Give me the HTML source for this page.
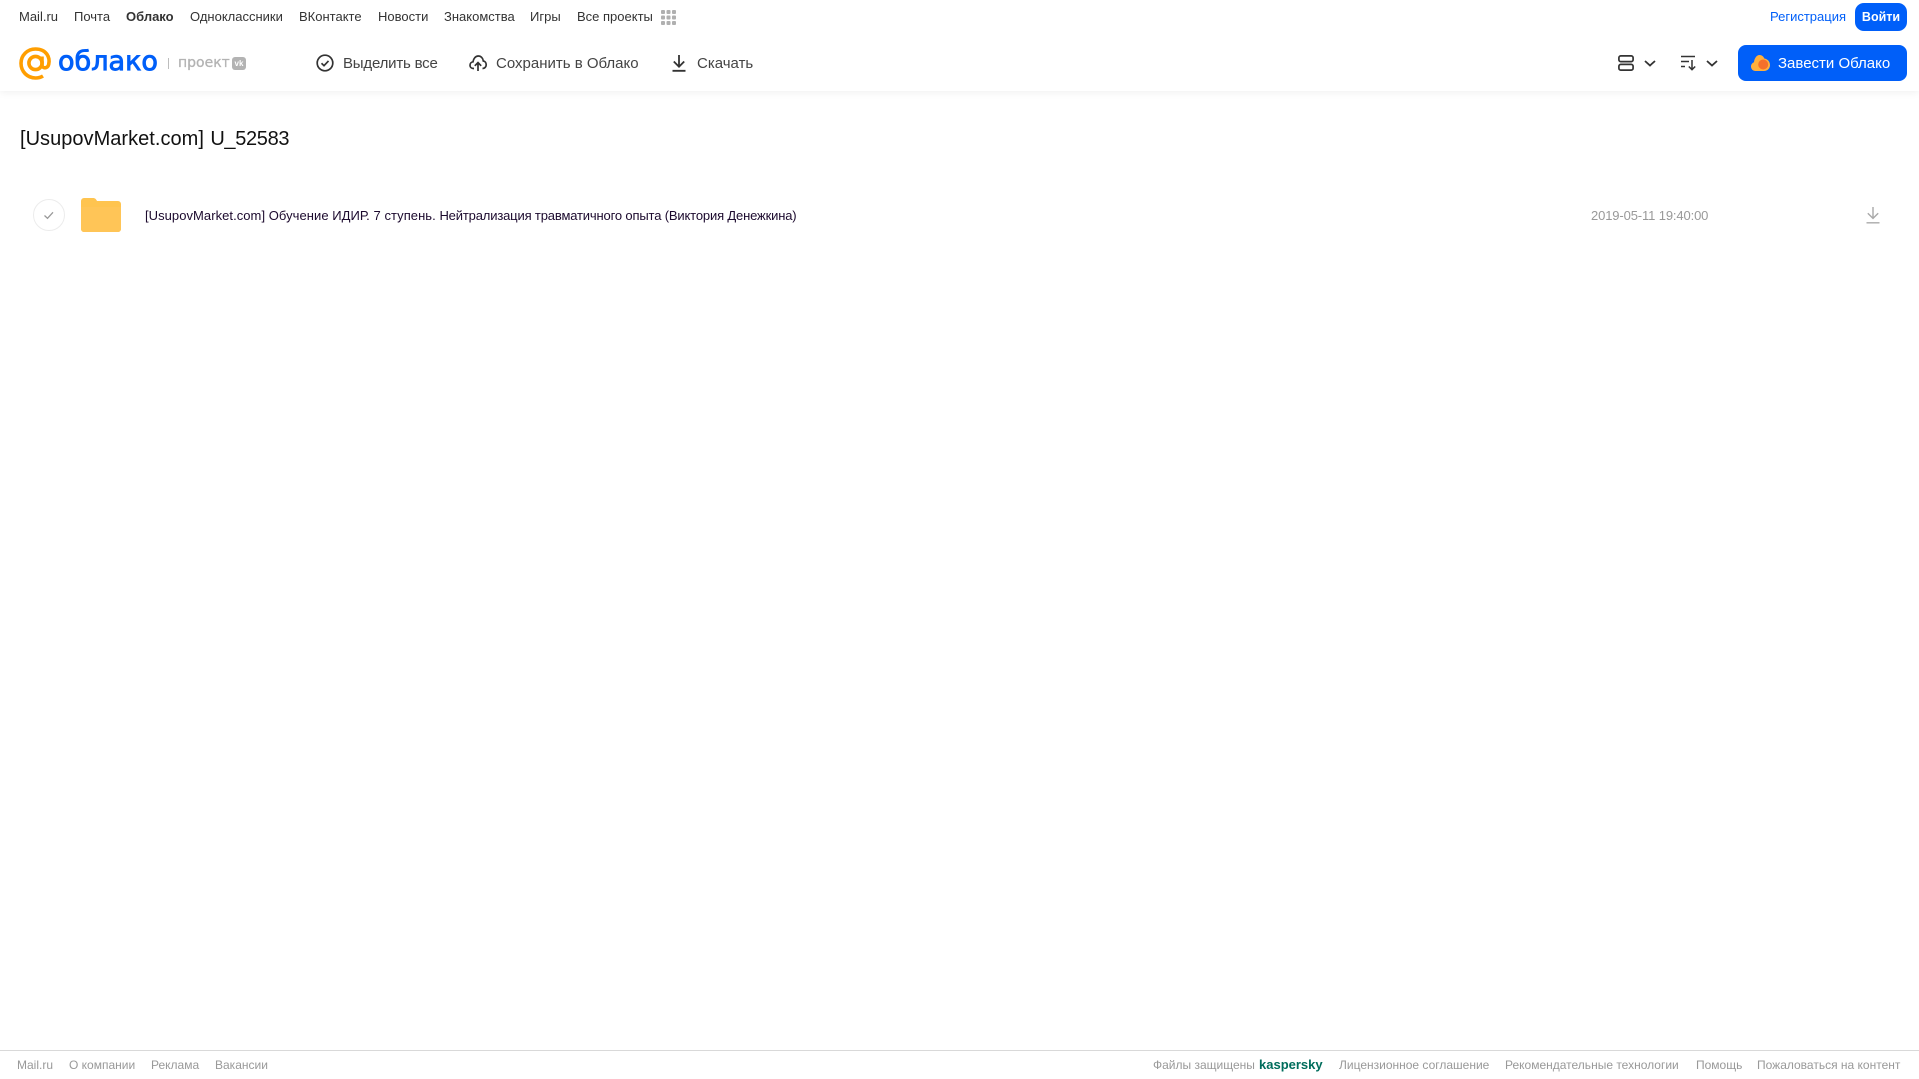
<!DOCTYPE html>
<html lang="ru"><head><meta charset="utf-8"><title>Облако</title>
<style>
html,body{margin:0;padding:0;background:#fff;width:1919px;height:1079px;overflow:hidden;font-family:"Liberation Sans","Noto Sans CJK SC",sans-serif}
.t{position:absolute;white-space:nowrap;line-height:20px}
.n{top:7px;font-size:13px;color:#333}
.b{top:54px;font-size:15px;color:#444}
.f{top:1055px;font-size:12px;color:#999}
svg{position:absolute;overflow:visible}
#hdr{position:absolute;left:0;top:0;width:1919px;height:91px;background:#fff;box-shadow:0 1px 8px rgba(0,0,0,.07)}
</style></head><body>
<div id="hdr"></div>
<span class="t n" style="left:19px">Mail.ru</span>
<span class="t n" style="left:74px">Почта</span>
<span class="t n" style="left:126px;font-weight:bold">Облако</span>
<span class="t n" style="left:190px">Одноклассники</span>
<span class="t n" style="left:299px">ВКонтакте</span>
<span class="t n" style="left:378px">Новости</span>
<span class="t n" style="left:444px">Знакомства</span>
<span class="t n" style="left:530px">Игры</span>
<span class="t n" style="left:577px">Все проекты</span>
<svg style="left:661px;top:10px" width="15" height="15" fill="#b0b0b0"><rect x="0" y="0" width="4" height="4" rx="1"/><rect x="5.500" y="0" width="4" height="4" rx="1"/><rect x="11" y="0" width="4" height="4" rx="1"/><rect x="0" y="5.500" width="4" height="4" rx="1"/><rect x="5.500" y="5.500" width="4" height="4" rx="1"/><rect x="11" y="5.500" width="4" height="4" rx="1"/><rect x="0" y="11" width="4" height="4" rx="1"/><rect x="5.500" y="11" width="4" height="4" rx="1"/><rect x="11" y="11" width="4" height="4" rx="1"/></svg>

<span class="t n" style="left:1770px;color:#005ff9">Регистрация</span>
<div style="position:absolute;left:1855px;top:3px;width:52px;height:28px;border-radius:9px;background:#005ff9;color:#fff;font-size:12.500px;font-weight:bold;line-height:29px;text-align:center">Войти</div>

<svg style="left:19px;top:47px" width="33" height="33" viewBox="0 0 33 33" fill="none" stroke="#ff9e00" stroke-width="3.600"><circle cx="16.500" cy="16" r="6.600"/><path d="M23 9.500v8.500c0 3.600 5.600 4 6.700-.6 1.600-7-2.200-15.400-13.200-15.400C8.400 2 2 8.300 2 16.300 2 24.800 8.500 31 16.500 31c3 0 5.400-.7 7.500-2"/></svg>
<svg style="left:56px;top:40px" width="110" height="44"><text x="2" y="30" font-family="DejaVu Sans" font-size="27" fill="#005ff9" stroke="#005ff9" stroke-width=".9" textLength="100" lengthAdjust="spacingAndGlyphs">облако</text></svg>
<div style="position:absolute;left:168px;top:58px;width:1px;height:11px;background:#bdbdbd"></div>
<span class="t" style="left:178px;top:53px;font-family:'DejaVu Sans',sans-serif;font-size:14px;color:#b3b3b3;-webkit-text-stroke:.3px #b3b3b3">проект</span>
<div style="position:absolute;left:232px;top:57px;width:14px;height:13px;border-radius:3px;background:#b3b3b3;color:#fff;font-size:8px;font-weight:bold;line-height:13px;text-align:center">vk</div>

<svg style="left:316px;top:54px" width="18" height="18" fill="none" stroke="#333" stroke-width="1.700"><circle cx="9" cy="9" r="7.800"/><path d="M5.500 9.300l2.500 2.400 4.500-4.800"/></svg>
<span class="t b" style="left:343px;letter-spacing:-.2px">Выделить все</span>
<svg style="left:469px;top:54px" width="18" height="18" fill="none" stroke="#333" stroke-width="1.700"><path d="M5 14.500H4.500C2.400 14.500 1 13 1 11.200 1 9.400 2.300 8 4 7.800 4.500 4.500 6.500 2 9.300 2c2.700 0 4.700 2.200 5 5 1.800.2 2.900 2 2.900 3.800 0 1.900-1.400 3.700-3.700 3.700"/><path d="M9 17V9M5.800 11.800L9 8.600l3.200 3.200"/></svg>
<span class="t b" style="left:496px">Сохранить в Облако</span>
<svg style="left:672px;top:54px" width="14" height="18" fill="none" stroke="#333" stroke-width="1.800"><path d="M7 1v11.500M1.800 7.500L7 12.700l5.200-5.200M.5 16.800h13"/></svg>
<span class="t b" style="left:697px">Скачать</span>

<svg style="left:1618px;top:55px" width="16" height="16" fill="none" stroke="#333" stroke-width="1.700"><rect x=".9" y=".9" width="14.200" height="5.700" rx="1.800"/><rect x=".9" y="9.400" width="14.200" height="5.700" rx="1.800"/></svg>
<svg style="left:1644px;top:60px" width="12" height="7" fill="none" stroke="#333" stroke-width="1.800"><path d="M1 1l5 4.500L11 1"/></svg>
<svg style="left:1681px;top:55px" width="16" height="16" fill="none" stroke="#333" stroke-width="1.500"><path d="M0 1.500h14M0 6.500h8M0 11.500h4M11 5v9.500M7.800 11.500l3.200 3.200 3.200-3.200"/></svg>
<svg style="left:1706px;top:60px" width="12" height="7" fill="none" stroke="#333" stroke-width="1.800"><path d="M1 1l5 4.500L11 1"/></svg>

<div style="position:absolute;left:1738px;top:45px;width:169px;height:36px;border-radius:8px;background:#005ff9"></div>
<svg style="left:1751px;top:54px" width="19" height="18"><path d="M4.500 17C2 17 0 15 0 12.500 0 10.500 1.300 8.900 3 8.300 3.300 4.500 5.500 1 8.500 1c2.400 0 4 1.500 4.800 3.500C16.500 5 19 7.500 19 11c0 3.400-2.500 6-6 6z" fill="#ffb03c"/><circle cx="12.200" cy="10.500" r="5" fill="#f5702a"/></svg>
<span class="t b" style="left:1778px;color:#fff">Завести Облако</span>

<span class="t" style="left:20px;top:127px;font-size:20px;line-height:24px;color:#111;letter-spacing:.03px;word-spacing:.8px">[UsupovMarket.com] <span style="letter-spacing:-.34px">U_52583</span></span>

<svg style="left:33px;top:199px" width="32" height="32" fill="none"><circle cx="16" cy="16" r="15.500" stroke="#ececec"/><path d="M11.500 16.500l3 2.800 5.500-6" stroke="#999" stroke-width="1.300"/></svg>
<svg style="left:81px;top:198px" width="40" height="34"><path d="M0 3a3 3 0 0 1 3-3h9c2 0 3 1 4 3h21a3 3 0 0 1 3 3v25a3 3 0 0 1-3 3H3a3 3 0 0 1-3-3z" fill="#ffc44f"/><path d="M0 9h40v22a3 3 0 0 1-3 3H3a3 3 0 0 1-3-3z" fill="#ffc557"/></svg>
<span class="t" style="left:145px;top:206px;font-size:13px;letter-spacing:.05px;color:#1c0a2e">[UsupovMarket.com] Обучение ИДИР. 7 ступень. <span style="letter-spacing:-.16px">Нейтрализация травматичного опыта (Виктория Денежкина)</span></span>
<span class="t" style="left:1591px;top:206px;font-size:13px;letter-spacing:-.13px;color:#999">2019-05-11 19:40:00</span>
<svg style="left:1866px;top:207px" width="14" height="17" fill="none" stroke="#a9a9a9" stroke-width="1.400"><path d="M7 0v11M1.800 6.200L7 11.400l5.200-5.200M.5 15.800h13" /></svg>

<div style="position:absolute;left:0;top:1050px;width:1919px;height:1px;background:#d9d9d9"></div>
<span class="t f" style="left:17px">Mail.ru</span>
<span class="t f" style="left:69px">О компании</span>
<span class="t f" style="left:151px">Реклама</span>
<span class="t f" style="left:215px">Вакансии</span>
<span class="t f" style="left:1153px">Файлы защищены</span>
<span class="t f" style="left:1259px;font-weight:bold;font-size:13px;color:#006d5c">kaspersky</span>
<span class="t f" style="left:1339px">Лицензионное соглашение</span>
<span class="t f" style="left:1505px">Рекомендательные технологии</span>
<span class="t f" style="left:1696px">Помощь</span>
<span class="t f" style="left:1757px">Пожаловаться на контент</span>
</body></html>
